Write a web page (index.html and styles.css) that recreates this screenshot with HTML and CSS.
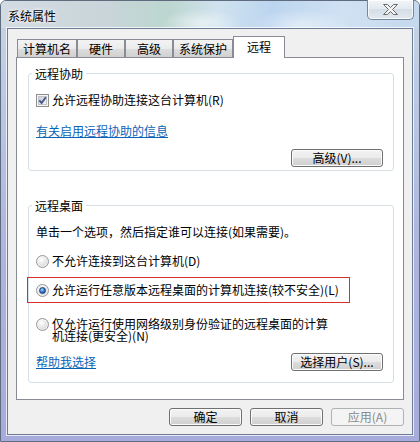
FILE: index.html
```html
<!DOCTYPE html>
<html lang="zh-CN">
<head>
<meta charset="utf-8">
<title>系统属性</title>
<link rel="stylesheet" href="styles.css">
</head>
<body>
<div class="window">
  <div class="titlebar">
    <span class="title">系统属性</span>
    <button class="close" aria-label="关闭">
      <svg width="15" height="11" viewBox="0 0 15 11"><polygon points="0.5,0.5 4.5,0.5 7.5,3.5 10.5,0.5 14.5,0.5 9.5,5.5 14.5,10.5 10.5,10.5 7.5,7.5 4.5,10.5 0.5,10.5 5.5,5.5" fill="#f3f3f3" stroke="#6b6b6b" stroke-width="1" stroke-linejoin="round"/></svg>
    </button>
  </div>
  <div class="client">
    <div class="tabs">
      <div class="tab">计算机名</div>
      <div class="tab short">硬件</div>
      <div class="tab short">高级</div>
      <div class="tab">系统保护</div>
      <div class="tab active">远程</div>
    </div>
    <div class="panel">
      <fieldset class="group g1">
        <legend>远程协助</legend>
        <div class="row">
          <span class="check"><svg width="13" height="13" viewBox="0 0 13 13"><defs><linearGradient id="cbg" x1="0" y1="0" x2="1" y2="1"><stop offset="0" stop-color="#c9ccd2"/><stop offset="1" stop-color="#f7f7f7"/></linearGradient></defs><rect x="0.5" y="0.5" width="12" height="12" fill="#f6f6f6" stroke="#8e8f8f"/><rect x="2.5" y="2.5" width="8" height="8" fill="url(#cbg)" stroke="#c2c4c8"/><path d="M3.3 6.4 L5.6 9 L9.8 3.2" fill="none" stroke="#46558f" stroke-width="1.9"/></svg></span>
          <span>允许远程协助连接这台计算机(R)</span>
        </div>
        <a class="link" href="#">有关启用远程协助的信息</a>
        <div class="btn-row"><button class="btn wide">高级(V)...</button></div>
      </fieldset>
      <fieldset class="group g2">
        <legend>远程桌面</legend>
        <div class="desc">单击一个选项，然后指定谁可以连接(如果需要)。</div>
        <div class="row r1"><span class="radio"></span><span>不允许连接到这台计算机(D)</span></div>
        <div class="highlight">
          <div class="row"><span class="radio on"><span class="dot"></span></span><span>允许运行任意版本远程桌面的计算机连接(较不安全)(L)</span></div>
        </div>
        <div class="row multi"><span class="radio"></span><span class="wrap">仅允许运行使用网络级别身份验证的远程桌面的计算机连接(更安全)(N)</span></div>
        <div class="btn-row split">
          <a class="link" href="#">帮助我选择</a>
          <button class="btn wide">选择用户(S)...</button>
        </div>
      </fieldset>
    </div>
    <div class="footer">
      <button class="btn">确定</button>
      <button class="btn">取消</button>
      <button class="btn" disabled>应用(A)</button>
    </div>
  </div>
</div>
</body>
</html>
```
FILE: styles.css
```css
* { box-sizing: border-box; }
html, body { margin: 0; padding: 0; }
body {
  width: 420px;
  height: 442px;
  overflow: hidden;
  font-family: "Noto Sans CJK SC", "Noto Sans", sans-serif;
  font-size: 12px;
  color: #000;
  background: #fff;
}
.window {
  width: 420px;
  height: 442px;
  display: flex;
  flex-direction: column;
  border: 1px solid #5f6c80;
  border-radius: 6px 6px 0 0;
  background: linear-gradient(180deg, #c9d6e3 0, #bccbe4 80px, #aeb4de 250px, #a6abdb 100%);
}
.titlebar {
  height: 27px;
  display: flex;
  justify-content: space-between;
  align-items: flex-start;
  padding-left: 7px;
  border-radius: 5px 5px 0 0;
  background:
    radial-gradient(ellipse 40px 14px at 200px 22px, rgba(255,255,255,.55), rgba(255,255,255,0)),
    radial-gradient(ellipse 50px 16px at 300px 24px, rgba(255,255,255,.5), rgba(255,255,255,0)),
    linear-gradient(90deg, #d3dbe2 0, #c9d5da 25%, #bcd6cf 40%, #cfe2ef 52%, #bcd5ef 65%, #d0e1f3 82%, #c4d8ee 100%);
}
.title {
  margin-top: 8px;
  line-height: 14px;
  text-shadow: 0 0 5px #fff, 0 0 3px #fff;
}
.close {
  width: 47px;
  height: 20px;
  margin-top: -1px;
  margin-right: 5px;
  padding: 0;
  border: 1px solid #77869b;
  border-top: none;
  border-radius: 0 0 5px 5px;
  background: linear-gradient(180deg, #f2f5f8 0, #e4eaf0 45%, #d5dde7 50%, #e3e9f0 100%);
  box-shadow: inset 0 0 0 1px rgba(255,255,255,.7);
  display: flex;
  align-items: center;
  justify-content: center;
}
.client {
  flex: 1;
  margin: 0 6px 6px 6px;
  border: 1px solid #6d7c95;
  box-shadow: 0 0 0 1px rgba(255,255,255,.75);
  background: #f0f0f0;
  padding: 7px 8px 0 8px;
  display: flex;
  flex-direction: column;
}
.tabs {
  height: 21px;
  display: flex;
  align-items: flex-end;
  padding-left: 1px;
}
.tab {
  height: 18px;
  line-height: 17px;
  padding: 0 5px;
  border: 1px solid #898c95;
  border-bottom: none;
  background: linear-gradient(180deg, #f3f3f3 0, #ebebeb 50%, #dedede 50%, #d0d0d0 100%);
  white-space: nowrap;
}
.tab.short { padding: 0 11px; }
.tab.active {
  height: 22px;
  line-height: 19px;
  padding: 0 13px;
  margin-bottom: -1px;
  background: #fff;
  position: relative;
  z-index: 1;
}
.panel {
  height: 343px;
  border: 1px solid #898c95;
  background: #fff;
  display: flex;
  flex-direction: column;
}
.group {
  margin: 0 9px 0 11px;
  border: 1px solid #d5dfe5;
  border-radius: 3px;
  min-width: 0;
}
.group legend {
  height: 15px;
  line-height: 15px;
  padding: 0 3px;
  margin-left: -4px;
}
.g1 { margin-top: 8px; padding: 12px 10px 3px 7px; }
.g2 { margin-top: 27px; padding: 12px 10px 11px 7px; }
.row {
  display: flex;
  align-items: center;
  height: 14px;
  line-height: 14px;
  white-space: nowrap;
}
.check { width: 13px; height: 13px; margin-right: 3px; display: flex; }
.radio {
  width: 13px;
  height: 13px;
  flex: none;
  margin-right: 3px;
  border-radius: 50%;
  border: 1px solid #969696;
  background: radial-gradient(circle at 40% 35%, #ffffff 0, #ececec 35%, #cbcbcb 100%);
  box-shadow: inset 0 0 0 1px rgba(255,255,255,.6);
  display: flex;
  align-items: center;
  justify-content: center;
}
.radio .dot {
  width: 7px;
  height: 7px;
  border-radius: 50%;
  background: radial-gradient(circle at 40% 35%, #b6dcff 0, #3b7fd0 45%, #0d3f86 100%);
  border: 1px solid #1b3f73;
}
.link {
  display: block;
  width: max-content;
  margin-top: 17px;
  line-height: 14px;
  color: #0b63b8;
  text-decoration: underline;
}
.btn-row {
  display: flex;
  justify-content: flex-end;
  margin-top: 11px;
}
.btn {
  width: 73px;
  height: 18px;
  padding: 0;
  font-family: inherit;
  font-size: 12px;
  line-height: 16px;
  color: #000;
  border: 1px solid #707070;
  border-radius: 3px;
  background: linear-gradient(180deg, #f2f2f2 0, #ebebeb 50%, #dddddd 50%, #cfcfcf 100%);
  box-shadow: inset 0 0 0 1px #fbfbfb;
}
.btn.wide { width: 92px; }
.btn:disabled {
  color: #8a8a8a;
  border-color: #adb2b5;
  background: #f4f4f4;
  box-shadow: none;
}
.desc { line-height: 14px; white-space: nowrap; }
.r1 { margin-top: 15px; }
.highlight {
  margin: 9px 0 0 -9px;
  width: 323px;
  padding: 5px 0 5px 8px;
  border: 1px solid #d8312c;
}
.row.multi {
  margin-top: 15px;
  height: auto;
  align-items: flex-start;
  line-height: 12px;
  white-space: normal;
}
.row.multi .radio { margin-top: 0; }
.wrap { width: 280px; }
.btn-row.split {
  justify-content: space-between;
  align-items: center;
}
.btn-row.split .link { margin-top: 0; }
.footer {
  margin-top: 8px;
  display: flex;
  justify-content: flex-end;
  gap: 8px;
}
```
